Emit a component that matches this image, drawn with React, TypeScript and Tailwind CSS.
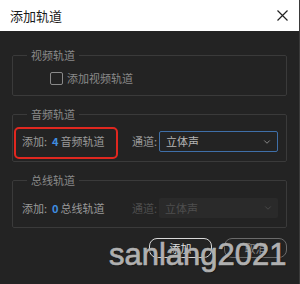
import { ChevronDown } from "lucide-react";

function App() {
  const cn = '"Noto Sans CJK SC", "Liberation Sans", sans-serif';

  return (
    <div
      className="relative w-[300px] h-[284px] bg-[#232323] overflow-hidden border-r border-[#3a3a3a]"
      style={{ fontFamily: cn }}
    >
      {/* Title bar */}
      <div className="h-[31px] bg-white flex items-center justify-between pl-[10px] pr-[10px]">
        <span className="text-[13px] text-[#1a1a1a] leading-none">添加轨道</span>
        <svg width="11" height="11" viewBox="0 0 11 11" className="mr-[1px]">
          <path d="M0.5 0.5 L10.5 10.5 M10.5 0.5 L0.5 10.5" stroke="#222" strokeWidth="1.2" />
        </svg>
      </div>

      <div className="px-3 pt-[18px]">
        {/* Video tracks */}
        <fieldset className="border border-[#3a3a3a] rounded-[2px] pl-[9px] pt-[11px] pb-[10px]">
          <legend className="ml-[5px] px-1 text-[11px] leading-[12px] text-[#8a8a8a]">视频轨道</legend>
          <label className="flex items-center ml-[28px] h-[13px] gap-[4px]">
            <span className="w-[13px] h-[13px] border-[1.5px] border-[#8a8a8a] rounded-[2px]" />
            <span className="text-[11px] leading-none text-[#8a8a8a]">添加视频轨道</span>
          </label>
        </fieldset>

        {/* Audio tracks */}
        <fieldset className="relative mt-[12px] border border-[#3a3a3a] rounded-[2px] pl-[9px] pt-[11px] pb-[9px]">
          <legend className="ml-[5px] px-1 text-[11px] leading-[12px] text-[#8a8a8a]">音频轨道</legend>
          <div className="flex items-center h-[21px]">
            <div className="w-[110px] flex items-center text-[11px] leading-none text-[#9a9a9a]">
              <span>添加:</span>
              <span className="ml-[5px] text-[#3f8de0] font-bold">4</span>
              <span className="ml-[2px]">音频轨道</span>
            </div>
            <span className="w-[27px] text-[11px] leading-none text-[#9a9a9a]">通道:</span>
            <div className="w-[119px] h-[21px] border border-[#3f6fa8] rounded-[2px] flex items-center justify-between pl-[6px] pr-[5px]">
              <span className="text-[11px] leading-none text-[#b5b5b5]">立体声</span>
              <ChevronDown size={10} color="#9a9a9a" strokeWidth={2} />
            </div>
          </div>
          <div className="absolute left-[1px] top-[7px] w-[104px] h-[32px] border-2 border-[#e0271f] rounded-[5px]" />
        </fieldset>

        {/* Bus tracks */}
        <fieldset className="mt-[12px] border border-[#3a3a3a] rounded-[2px] pl-[9px] pt-[12px] pb-[9px]">
          <legend className="ml-[5px] px-1 text-[11px] leading-[12px] text-[#8a8a8a]">总线轨道</legend>
          <div className="flex items-center h-[20px]">
            <div className="w-[110px] flex items-center text-[11px] leading-none text-[#9a9a9a]">
              <span>添加:</span>
              <span className="ml-[5px] text-[#3f8de0] font-bold">0</span>
              <span className="ml-[2px]">总线轨道</span>
            </div>
            <span className="w-[27px] text-[11px] leading-none text-[#4e4e4e]">通道:</span>
            <div className="w-[119px] h-[20px] bg-[#2a2a2a] rounded-[2px] flex items-center justify-between pl-[6px] pr-[5px]">
              <span className="text-[11px] leading-none text-[#4e4e4e]">立体声</span>
              <ChevronDown size={10} color="#4e4e4e" strokeWidth={2} />
            </div>
          </div>
        </fieldset>

        {/* Buttons */}
        <div className="mt-[10px] flex justify-end gap-[12px]">
          <button className="w-[63px] h-[20px] border border-[#d8d8d8] rounded-[8px] text-[11px] leading-none text-[#e0e0e0]">
            添加
          </button>
          <button className="w-[63px] h-[20px] border border-[#6a6a6a] rounded-[8px] text-[11px] leading-none text-[#8a8a8a]">
            取消
          </button>
        </div>
      </div>

      {/* Watermark */}
      <div
        className="absolute left-[109px] top-[239px] text-[31px] leading-none text-[#b0b0b0] [-webkit-text-stroke:0.7px_#b0b0b0] [text-shadow:1px_1px_1px_rgba(0,0,0,0.5)]"
        style={{ fontFamily: '"Liberation Sans", sans-serif' }}
      >
        sanlang2021
      </div>
    </div>
  );
}

export default App;
